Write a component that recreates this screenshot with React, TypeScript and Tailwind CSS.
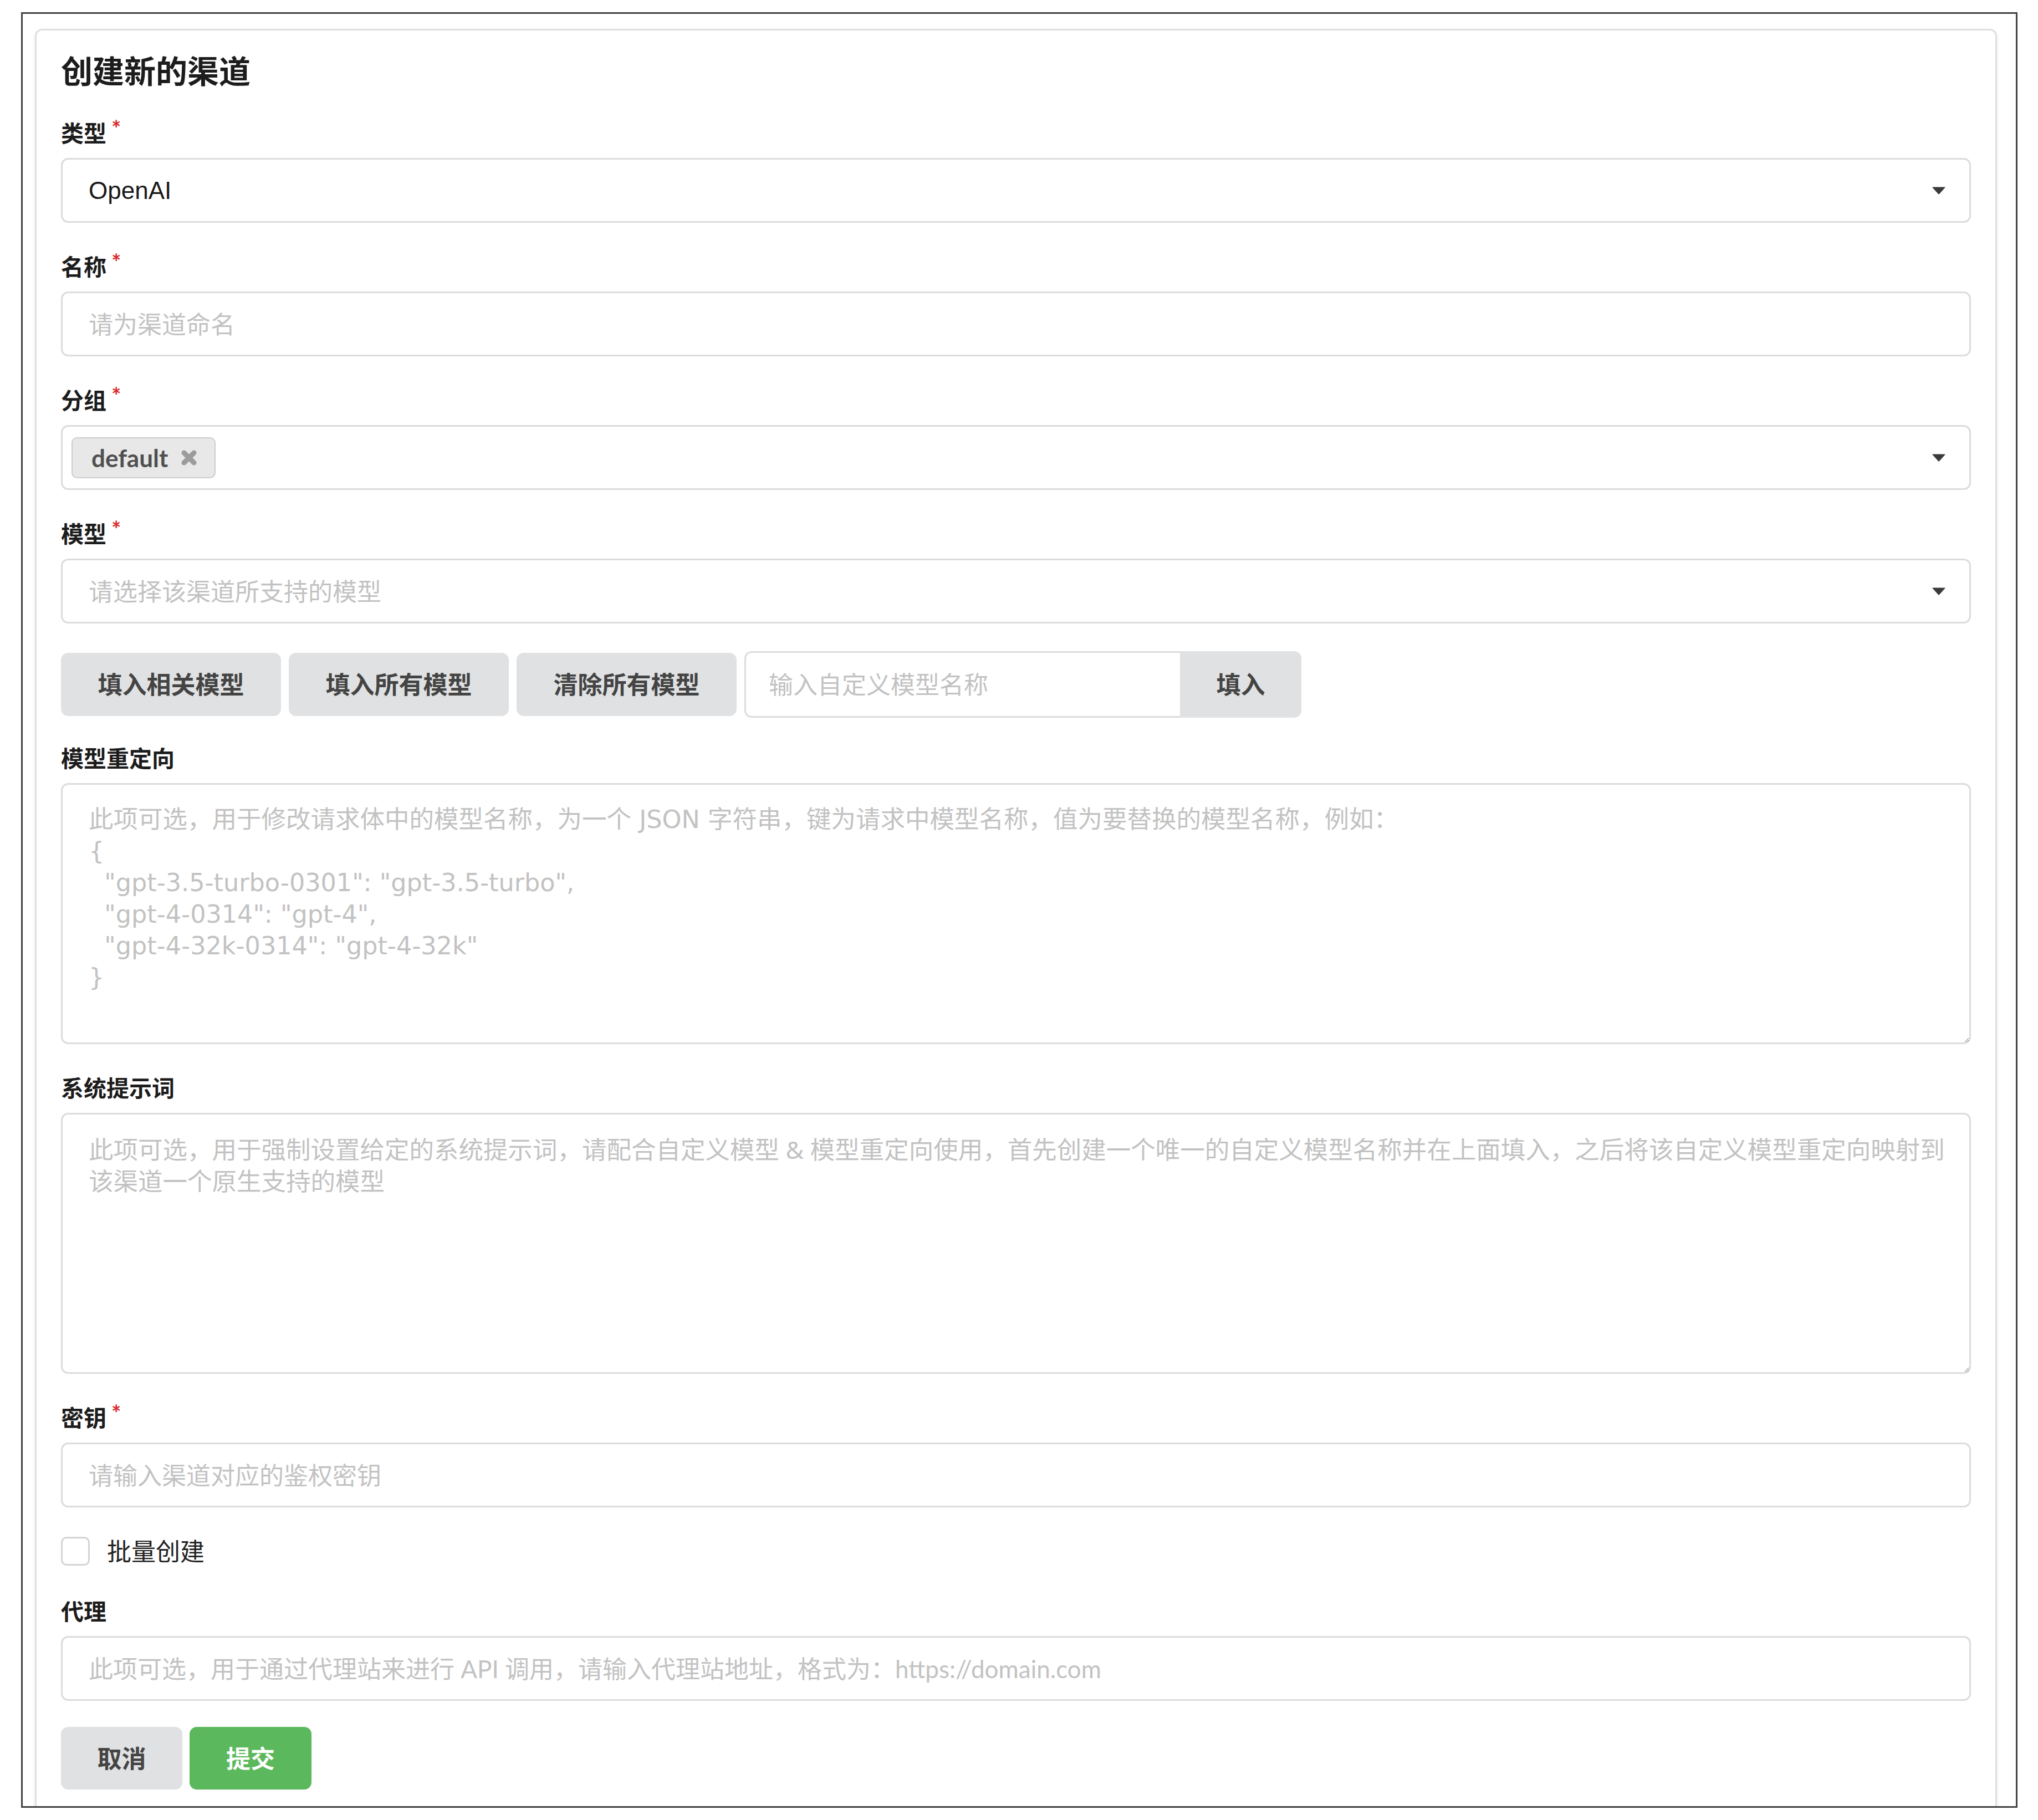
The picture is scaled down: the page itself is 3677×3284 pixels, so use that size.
import React from "react";

function Caret() {
  return (
    <svg width="24" height="14" viewBox="0 0 24 14" className="shrink-0">
      <path d="M1 0.5 H23 Q24 0.5 23.3 1.4 L12.8 13.2 Q12 14 11.2 13.2 L0.7 1.4 Q0 0.5 1 0.5 Z" fill="#3a3a3a" />
    </svg>
  );
}

function XIcon() {
  return (
    <svg width="30" height="30" viewBox="0 0 30 30" className="shrink-0">
      <path d="M6 6 L24 24 M24 6 L6 24" stroke="#9c9c9c" strokeWidth="9" strokeLinecap="round" />
    </svg>
  );
}

function Label({ text, required }: { text: string; required?: boolean }) {
  return (
    <div className="mb-[15px] h-[59px] text-[41px] leading-[59px] font-bold text-[#1c1c1c] font-['Lato','Noto_Sans_CJK_SC',sans-serif]">
      {text}
      {required && (
        <span className="ml-[9px] inline-block align-top text-[41px] leading-none font-bold text-[#db2828] font-['Lato',sans-serif]">
          *
        </span>
      )}
    </div>
  );
}

const redirectPlaceholder =
  '此项可选，用于修改请求体中的模型名称，为一个 JSON 字符串，键为请求中模型名称，值为要替换的模型名称，例如：\n{\n  "gpt-3.5-turbo-0301": "gpt-3.5-turbo",\n  "gpt-4-0314": "gpt-4",\n  "gpt-4-32k-0314": "gpt-4-32k"\n}';

const systemPlaceholder =
  "此项可选，用于强制设置给定的系统提示词，请配合自定义模型 & 模型重定向使用，首先创建一个唯一的自定义模型名称并在上面填入，之后将该自定义模型重定向映射到\n该渠道一个原生支持的模型";

export default function App() {
  return (
    <div className="min-h-[3284px] w-full bg-white pt-[22px]">
      <div className="ml-[38px] h-[3240px] w-[3602px] overflow-hidden border-[3px] border-[#444444] bg-white">
        <div className="ml-[22px] mt-[27px] w-[3540px] rounded-[13px] border-[3px] border-[#dfdfe0] px-[44px] pt-[41px] pb-[44px] shadow-[0_3px_6px_rgba(34,36,38,0.08)]">
          {/* Title */}
          <div className="mb-[51px] h-[64px] text-[57px] leading-[64px] font-bold text-[#1c1c1c] font-['Lato','Noto_Sans_CJK_SC',sans-serif]">
            创建新的渠道
          </div>

          {/* 类型 */}
          <div className="mb-[50px]">
            <Label text="类型" required />
            <div className="flex h-[117px] items-center justify-between rounded-[13px] border-[3px] border-[#dcdcdd] pl-[47px] pr-[43px]">
              <span className="text-[44px] leading-none text-[#1a1a1a] font-['Liberation_Sans',sans-serif]">OpenAI</span>
              <Caret />
            </div>
          </div>

          {/* 名称 */}
          <div className="mb-[50px]">
            <Label text="名称" required />
            <input
              className="block h-[117px] w-full rounded-[13px] border-[3px] border-[#dcdcdd] px-[47px] text-[44px] text-[#1a1a1a] outline-none placeholder:text-[#c2c2c2] font-['Lato','Noto_Sans_CJK_SC',sans-serif]"
              placeholder="请为渠道命名"
            />
          </div>

          {/* 分组 */}
          <div className="mb-[50px]">
            <Label text="分组" required />
            <div className="flex h-[117px] items-center justify-between rounded-[13px] border-[3px] border-[#dcdcdd] pl-[16px] pr-[43px]">
              <div className="flex h-[74px] items-center gap-[23px] rounded-[10px] border-2 border-[#cdcdcd] bg-[#e8e8e8] pl-[34px] pr-[31px]">
                <span className="text-[44px] leading-none font-bold text-[#505050] font-['Lato',sans-serif]">default</span>
                <XIcon />
              </div>
              <Caret />
            </div>
          </div>

          {/* 模型 */}
          <div className="mb-[50px]">
            <Label text="模型" required />
            <div className="flex h-[117px] items-center justify-between rounded-[13px] border-[3px] border-[#dcdcdd] pl-[47px] pr-[43px]">
              <span className="text-[44px] leading-none text-[#c2c2c2] font-['Lato','Noto_Sans_CJK_SC',sans-serif]">
                请选择该渠道所支持的模型
              </span>
              <Caret />
            </div>
          </div>

          {/* Button row */}
          <div className="mb-[44px] flex items-center gap-[14px] font-['Lato','Noto_Sans_CJK_SC',sans-serif]">
            <button className="h-[114px] w-[397px] rounded-[13px] bg-[#e0e1e2] text-[44px] font-bold text-[#444444]">
              填入相关模型
            </button>
            <button className="h-[114px] w-[397px] rounded-[13px] bg-[#e0e1e2] text-[44px] font-bold text-[#444444]">
              填入所有模型
            </button>
            <button className="h-[114px] w-[397px] rounded-[13px] bg-[#e0e1e2] text-[44px] font-bold text-[#444444]">
              清除所有模型
            </button>
            <div className="flex h-[120px] w-[1005px]">
              <input
                className="h-full w-[786px] rounded-l-[13px] border-y-[3px] border-l-[3px] border-[#dcdcdd] px-[41px] text-[44px] outline-none placeholder:text-[#c2c2c2] font-['Lato','Noto_Sans_CJK_SC',sans-serif]"
                placeholder="输入自定义模型名称"
              />
              <button className="h-full w-[219px] rounded-r-[13px] bg-[#e0e1e2] text-[44px] font-bold text-[#444444]">
                填入
              </button>
            </div>
          </div>

          {/* 模型重定向 */}
          <div className="mb-[50px]">
            <Label text="模型重定向" />
            <textarea
              className="block h-[471px] w-full resize-y rounded-[13px] border-[3px] border-[#dcdcdd] pl-[47px] pr-[20px] pt-[34px] text-[44.5px] leading-[57px] outline-none placeholder:text-[#c2c2c2] font-['DejaVu_Sans','Noto_Sans_CJK_SC',sans-serif]"
              placeholder={redirectPlaceholder}
            />
          </div>

          {/* 系统提示词 */}
          <div className="mb-[50px]">
            <Label text="系统提示词" />
            <textarea
              className="block h-[471px] w-full resize-y rounded-[13px] border-[3px] border-[#dcdcdd] pl-[47px] pr-[20px] pt-[34px] text-[44.5px] leading-[57px] outline-none placeholder:text-[#c2c2c2] font-['Noto_Sans','Noto_Sans_CJK_SC',sans-serif]"
              placeholder={systemPlaceholder}
            />
          </div>

          {/* 密钥 */}
          <div className="mb-[53px]">
            <Label text="密钥" required />
            <input
              className="block h-[117px] w-full rounded-[13px] border-[3px] border-[#dcdcdd] px-[47px] text-[44px] outline-none placeholder:text-[#c2c2c2] font-['Lato','Noto_Sans_CJK_SC',sans-serif]"
              placeholder="请输入渠道对应的鉴权密钥"
            />
          </div>

          {/* 批量创建 */}
          <div className="mb-[53px] flex h-[52px] items-center gap-[31px]">
            <div className="h-[52px] w-[52px] rounded-[10px] border-[3px] border-[#d4d4d5] bg-white" />
            <span className="text-[44px] leading-none text-[#222222] font-['Lato','Noto_Sans_CJK_SC',sans-serif]">批量创建</span>
          </div>

          {/* 代理 */}
          <div className="mb-[47px]">
            <Label text="代理" />
            <input
              className="block h-[117px] w-full rounded-[13px] border-[3px] border-[#dcdcdd] px-[47px] text-[44px] outline-none placeholder:text-[#c2c2c2] font-['Lato','Noto_Sans_CJK_SC',sans-serif]"
              placeholder="此项可选，用于通过代理站来进行 API 调用，请输入代理站地址，格式为：https://domain.com"
            />
          </div>

          {/* Actions */}
          <div className="flex gap-[13px] font-['Lato','Noto_Sans_CJK_SC',sans-serif]">
            <button className="h-[113px] w-[219px] rounded-[13px] bg-[#e0e1e2] text-[44px] font-bold text-[#444444]">
              取消
            </button>
            <button className="h-[113px] w-[220px] rounded-[13px] bg-[#5cb85c] text-[44px] font-bold text-white">
              提交
            </button>
          </div>
        </div>
      </div>
    </div>
  );
}
